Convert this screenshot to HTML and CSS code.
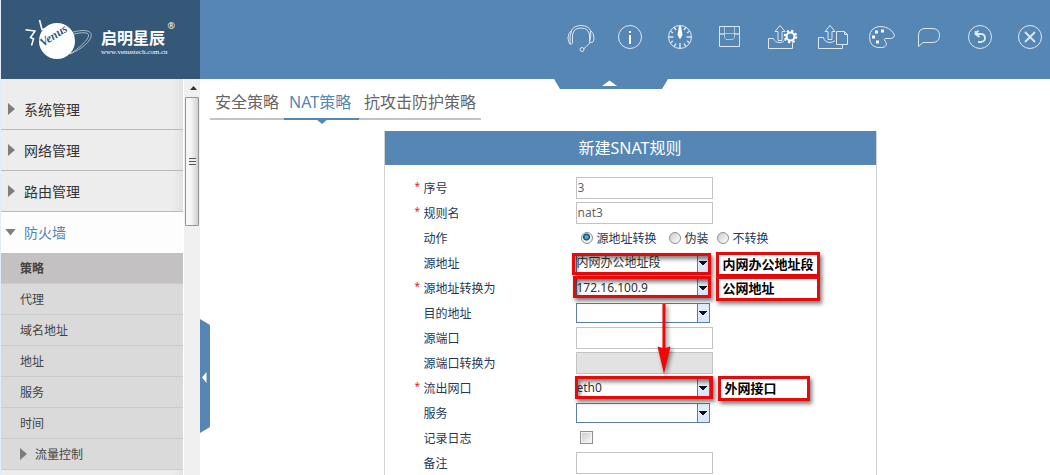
FILE: index.html
```html
<!DOCTYPE html>
<html lang="zh-CN">
<head>
<meta charset="utf-8">
<title>新建SNAT规则</title>
<link rel="stylesheet" href="styles.css">
</head>
<body>
<header class="topbar">
  <div class="brand">
    <svg class="brand-mark" width="74" height="44" viewBox="24 18 74 44" aria-hidden="true">
      <g fill="none" stroke="#fff" stroke-linejoin="miter">
        <path d="M25.500 29.800L35 31l-4.500 6.500 3 1.500-2 6.500" stroke-width="1.500"/>
        <path d="M39.500 20l2.500 9.500 3-.5" stroke-width="1.600"/>
        <path d="M69 33.500c10-4 20-4 22 0 2 6-8 15-21 20.500 8-5 20-15 18.500-19.500-2-3-10-2-19 1z" stroke-width=".7" stroke="#d5e0ea"/>
      </g>
      <circle cx="57" cy="41" r="18" fill="#fff"/>
      <text class="brand-script" x="43" y="47" transform="rotate(-33 43 47)">Venus</text>
    </svg>
    <div class="brand-words">
      <span class="brand-name">启明星辰</span>
      <span class="brand-url">www.venustech.com.cn</span>
    </div>
    <span class="brand-reg">®</span>
  </div>
  <nav class="tools" aria-label="工具栏">
    <button type="button" class="tool" aria-label="支持"><svg viewBox="0 0 30 30"><path d="M5 22Q3 20 3 16Q3 11 6.500 8.500Q9 3.500 16 3.500T25.500 8.500Q29 11 29 16T25.500 20.500L18.500 27M5 22Q8 23 7.500 19L7.500 13Q8.500 6 16 6T24.500 13V20.500M6.500 8.500Q4.500 14 5 22M25.500 8.500Q26.500 14 24.500 20.500"/><circle cx="17" cy="27.500" r="2"/></svg></button>
    <button type="button" class="tool" aria-label="信息"><svg viewBox="0 0 30 30"><circle cx="15" cy="15" r="11.500"/><path class="solid" d="M14 9h2v2h-2zM14 13h2v9h-2z"/></svg></button>
    <button type="button" class="tool" aria-label="仪表盘"><svg viewBox="0 0 30 30"><circle cx="15" cy="15" r="11.500"/><path d="M3.500 15h5M21.500 15h5M15 26v-5M9 5l2 3M5 9l3 2M5 21l3-2M9 25l2-3.500M21 5l-2 3M25 9l-3 2M25 21l-3-2M21 25l-2-3.500" stroke-width="1.500"/><path class="solid" d="M14 4h2l1.500 9L15 17.500 12.500 13z"/></svg></button>
    <button type="button" class="tool" aria-label="保存"><svg viewBox="0 0 30 30"><path d="M4.500 4.500h20v20h-20z"/><path d="M9.500 4.500v11l1.500 2h7l1.500-2v-11M4.500 11.500h20M4.500 12.500h5M19.500 12.500h5" opacity=".65"/></svg></button>
    <button type="button" class="tool" aria-label="导入设置"><svg viewBox="0 0 30 30"><path d="M8.500 16.500h-5v10h24v-6M8.500 16.500q1 4 6.500 4 3 0 4.500-2M13 18.500v-9h-3L15 3.500l5 6h-3v9z"/><g class="gear"><circle cx="25.500" cy="14.500" r="4" stroke-width="2.200"/><circle cx="25.500" cy="14.500" r="5.800" stroke-width="2" stroke-dasharray="2.300 2.250"/></g></svg></button>
    <button type="button" class="tool" aria-label="导出文件"><svg viewBox="0 0 30 30"><path d="M8.500 15.500h-5v11h24v-4M8.500 15.500q1 5 6.500 5 3 0 5-2M13 17.500v-8h-3L15 3.500l5 6h-3v8zM21.500 9.500h8l3 3v10h-11zM29.500 9.500v3h3"/></svg></button>
    <button type="button" class="tool" aria-label="主题"><svg viewBox="0 0 30 30"><path d="M14 4.500Q25 4 29.500 13Q29.500 16 26 16.500H20Q18 17.500 20.500 19.500Q23 24 18 25.500Q4 27 4.500 14.500Q5 6 14 4.500z"/><path class="solid" d="M10 8.500h3v3h-3zM16 7.500h3v3h-3zM7 13.500h3v3H7zM11 18.500h3v3h-3z"/></svg></button>
    <button type="button" class="tool" aria-label="消息"><svg viewBox="0 0 30 30"><path d="M3.500 24.500V13Q4 6.500 10 6.500H17Q24.500 6.500 24.500 13.500T17 20.500H8z"/></svg></button>
    <button type="button" class="tool" aria-label="刷新"><svg viewBox="0 0 30 30"><circle cx="15" cy="15" r="11.500"/><path d="M11 12h5.500q3.500.5 3.500 4t-4 4h-3M13.500 8.500L10.500 12l4 3M10.500 9v3.500" stroke-width="1.800"/></svg></button>
    <button type="button" class="tool" aria-label="关闭"><svg viewBox="0 0 30 30"><circle cx="15" cy="15" r="11.500"/><path d="M10 10l10 10M20 10L10 20" stroke-width="1.800"/></svg></button>
  </nav>
  <button type="button" class="fold-top" aria-label="收起顶栏"><svg width="114" height="10" viewBox="0 0 114 10"><path fill="#5686b4" d="M0 0h114l-6 10H6z"/><path fill="#fff" d="M48 7l7.500-5.500L63 7z"/></svg></button>
</header>

<div class="workspace">
  <aside class="sidebar">
    <nav class="menu" aria-label="主菜单">
      <a class="group" href="#system"><i class="caret"></i>系统管理</a>
      <a class="group" href="#network"><i class="caret"></i>网络管理</a>
      <a class="group" href="#route"><i class="caret"></i>路由管理</a>
      <a class="group open" href="#firewall"><i class="caret"></i>防火墙</a>
      <a class="item current" href="#policy">策略</a>
      <a class="item" href="#proxy">代理</a>
      <a class="item" href="#domain">域名地址</a>
      <a class="item" href="#address">地址</a>
      <a class="item" href="#service">服务</a>
      <a class="item" href="#time">时间</a>
      <a class="item" href="#traffic"><i class="caret"></i>流量控制</a>
    </nav>
    <div class="scrollbar" aria-hidden="true">
      <svg class="scroll-up" width="16" height="18"><path d="M5 11l3.500-4L12 11z" fill="#333"/></svg>
      <div class="thumb"><i class="grip"></i></div>
    </div>
    <button type="button" class="fold-side" aria-label="收起菜单"><svg width="10" height="114" viewBox="0 0 10 114"><path fill="#5686b4" d="M0 0l10 6v102l-10 6z"/><path fill="#fff" d="M2 58.500l4.500-5.500v11z"/></svg></button>
  </aside>

  <main class="content">
    <nav class="tabs" aria-label="策略类型">
      <a class="tab" href="#security">安全策略</a>
      <a class="tab active" href="#nat">NAT策略</a>
      <a class="tab" href="#attack">抗攻击防护策略</a>
    </nav>
    <form class="card">
      <h1 class="card-title">新建SNAT规则</h1>
      <div class="fields">
        <div class="row required"><label for="seq">序号</label><input class="text" id="seq" type="text" value="3"></div>
        <div class="row required"><label for="name">规则名</label><input class="text" id="name" type="text" value="nat3"></div>
        <div class="row" role="radiogroup" aria-labelledby="act"><span class="label" id="act">动作</span>
          <div class="choices">
            <label class="choice wide-choice"><input class="radio" type="radio" name="action" checked>源地址转换</label>
            <label class="choice"><input class="radio" type="radio" name="action">伪装</label>
            <label class="choice"><input class="radio" type="radio" name="action">不转换</label>
          </div></div>
        <div class="row"><label for="src">源地址</label><select class="combo" id="src"><option>内网办公地址段</option></select></div>
        <div class="row required"><label for="srcto">源地址转换为</label><select class="combo" id="srcto"><option>172.16.100.9</option></select></div>
        <div class="row"><label for="dst">目的地址</label><select class="combo" id="dst"><option></option></select></div>
        <div class="row"><label for="sport">源端口</label><input class="text" id="sport" type="text"></div>
        <div class="row"><label for="sportto">源端口转换为</label><input class="text" id="sportto" type="text" disabled></div>
        <div class="row required"><label for="out">流出网口</label><select class="combo" id="out"><option>eth0</option></select></div>
        <div class="row"><label for="svc">服务</label><select class="combo" id="svc"><option></option></select></div>
        <div class="row"><label for="log">记录日志</label><input class="check" id="log" type="checkbox"></div>
        <div class="row"><label for="memo">备注</label><input class="text" id="memo" type="text"></div>
      </div>
      <div class="mark mark-src"></div>
      <div class="mark mark-srcto"></div>
      <div class="mark mark-out"></div>
      <div class="note note-src">内网办公地址段</div>
      <div class="note note-srcto">公网地址</div>
      <div class="note note-out">外网接口</div>
      <svg class="arrow" width="16" height="72" viewBox="0 0 16 72" aria-hidden="true"><path fill="#f00808" d="M6.500 0h3v44l5-1.500L8 70 1.500 42.500l5 1.500z"/></svg>
    </form>
  </main>
</div>
</body>
</html>
```

FILE: styles.css
```css
* { box-sizing: border-box; }

body {
  margin: 0;
  height: 100vh;
  overflow: hidden;
  display: flex;
  flex-direction: column;
  border-left: 1px solid #e4ecf6;
  background: #fff;
  font-family: "Noto Sans", "Noto Sans CJK SC", sans-serif;
  font-size: 12px;
}

button { padding: 0; border: 0; background: none; }
a { color: inherit; text-decoration: none; }
svg { display: block; }

/* Top bar */
.topbar {
  position: relative;
  z-index: 2;
  flex: none;
  height: 79px;
  display: flex;
  justify-content: space-between;
  background: #5686b4;
}
.brand {
  width: 199px;
  padding: 18px 0 0 23px;
  display: flex;
  align-items: flex-start;
  background: #355878;
  color: #fff;
}
.brand-script {
  font: italic bold 12px "Liberation Serif", serif;
  fill: #355878;
}
.brand-words {
  display: flex;
  flex-direction: column;
  padding: 10px 0 0 3px;
}
.brand-name {
  font-size: 16px;
  font-weight: 700;
  line-height: 20px;
  white-space: nowrap;
}
.brand-url {
  font: 7px/8px "Liberation Serif", serif;
}
.brand-reg { font-size: 9px; line-height: 16px; }
.tools {
  display: flex;
  gap: 20px;
  padding: 22px 5px 0 0;
}
.tool { width: 30px; height: 30px; }
.tool svg {
  width: 30px;
  height: 30px;
  overflow: visible;
  fill: none;
  stroke: #dce8f5;
  stroke-width: 1;
}
.tool .solid { fill: #fff; stroke: none; }
.tool .gear { stroke: #fff; }
.tool .gear circle:first-child { fill: #5686b4; }
.fold-top {
  position: absolute;
  top: 100%;
  left: calc(50% + 28px);
}

/* Sidebar */
.workspace { flex: 1; min-height: 0; display: flex; }
.sidebar {
  position: relative;
  flex: none;
  width: 199px;
  display: flex;
}
.menu {
  flex: 1;
  padding-top: 10px;
  overflow: hidden;
  background: linear-gradient(to right, #ededed 94%, #e2e2e2);
}
.group {
  height: 41px;
  padding-left: 7px;
  display: flex;
  align-items: center;
  gap: 9px;
  border-bottom: 1px solid #bababa;
  color: #333;
  font-size: 14px;
}
.caret {
  width: 7px;
  height: 12px;
  background: #7d7d7d;
  clip-path: polygon(0 0, 100% 50%, 0 100%);
}
.open {
  padding-left: 4px;
  gap: 8px;
  border-bottom-color: #fdfdfd;
  background: #fdfdfd;
  color: #5686b4;
}
.open .caret {
  width: 11px;
  height: 7px;
  clip-path: polygon(0 0, 100% 0, 50% 100%);
}
.item {
  height: 31px;
  padding-left: 19px;
  display: flex;
  align-items: center;
  gap: 8px;
  border-bottom: 1px solid #cbcbcb;
  background: #dadada;
  color: #444;
}
.item:last-child { box-shadow: 0 40px #dadada; }
.current { background: #c3c1c1; font-weight: 700; }
.scrollbar {
  width: 17px;
  padding: 0 1px;
  border-left: 1px solid #fff;
  background: #f0f0f0;
}
.thumb {
  height: 129px;
  display: grid;
  place-items: center;
  border: 1px solid #949494;
  border-radius: 1px;
  background: linear-gradient(to right, #f6f6f6 40%, #cfcfd2);
}
.grip {
  width: 7px;
  height: 8px;
  background: repeating-linear-gradient(#555 0 1px, #eee 1px 3px);
}
.fold-side { position: absolute; left: 100%; top: 240px; }

/* Content */
.content {
  flex: 1;
  padding-left: 10px;
  display: flex;
  flex-direction: column;
  align-items: center;
}
.tabs { align-self: flex-start; display: flex; }
.tab {
  position: relative;
  height: 41px;
  padding: 11px 5px 0;
  border-bottom: 2px solid #c3c3c3;
  color: #666;
  font-size: 16px;
  line-height: 24px;
}
.tab.active { min-width: 75px; border-color: #5686b4; color: #5686b4; }
.tab.active::after {
  content: "";
  position: absolute;
  top: 100%;
  left: 50%;
  margin: 1px 0 0 -6px;
  border: 6px solid transparent;
  border-top: 5px solid #5686b4;
  border-bottom: 0;
}
.card {
  position: relative;
  flex: 1;
  width: 100%;
  max-width: 493px;
  margin-top: 11px;
  border: 1px solid #d3d3d3;
  border-width: 0 1px;
}
.card-title {
  margin: 0;
  background: #5686b4;
  color: #fff;
  font-size: 16px;
  font-weight: 400;
  line-height: 34px;
  text-align: center;
}
.fields { padding: 10px 0 0 30px; }
.row {
  height: 25px;
  display: grid;
  grid-template-columns: 161px 1fr;
  align-items: center;
  color: #253858;
}
.row > label, .label { position: relative; padding-left: 9px; }
.required > label::before {
  content: "*";
  position: absolute;
  left: 0;
  color: #e02020;
  font-size: 10px;
}
.text, .combo {
  font: inherit;
  border-radius: 0;
  margin: 0;
}
.text {
  width: 137px;
  height: 22px;
  padding: 0 1px;
  border: 1px solid #c3c3c3;
  background: #fff;
  color: #666;
}
.text:disabled { background: #e2e2e2; }
.combo {
  appearance: none;
  width: 134px;
  height: 20px;
  padding: 0 14px 0 0;
  border: 1px solid #5c7da8;
  background:
    conic-gradient(from -50deg at 50% 100%, #111 100deg, transparent 0) right 2px center / 8px 4px no-repeat,
    linear-gradient(#5c7da8, #5c7da8) right 11px top / 1px 100% no-repeat,
    linear-gradient(#e3eefb, #d8e8fb) right top / 11px 100% no-repeat,
    #fff;
  color: #333;
  line-height: 18px;
}
.choices { display: flex; gap: 8px; padding: 1px 0 0 5px; }
.choice { display: flex; align-items: center; gap: 4px; }
.wide-choice { padding-right: 4px; }
.radio, .check { appearance: none; margin: 0; border: 1px solid #8e8f8f; }
.radio {
  width: 12px;
  height: 12px;
  border-radius: 50%;
  background: linear-gradient(135deg, #ccc, #fff);
}
.radio:checked { background: radial-gradient(circle at 45% 40%, #49bde4 0 1px, #154566 3px, #eee 4px); }
.check {
  width: 13px;
  height: 13px;
  margin-left: 4px;
  background: linear-gradient(135deg, #c6cace, #fafafa);
  box-shadow: inset 0 0 0 1px #f4f4f4;
}

/* Callouts over the form */
.mark, .note {
  position: absolute;
  border: 3px solid #e60a0a;
  box-shadow: 2px 3px 4px rgba(0, 0, 0, .5);
}
.mark { box-shadow: 2px 3px 4px rgba(0, 0, 0, .5), inset 2px 3px 4px rgba(0, 0, 0, .5); pointer-events: none; }
.mark-src { left: 187px; top: 122px; width: 139px; height: 22px; }
.mark-srcto { left: 188px; top: 145px; width: 138px; height: 22px; }
.mark-out { left: 190px; top: 245px; width: 138px; height: 23px; }
.note {
  height: 25px;
  padding-left: 4px;
  background: #fff;
  color: #000;
  font-size: 13px;
  font-weight: 700;
  line-height: 19px;
  white-space: nowrap;
}
.note-src { left: 331px; top: 121px; width: 104px; }
.note-srcto { left: 331px; top: 145px; width: 104px; }
.note-out { left: 333px; top: 245px; width: 92px; }
.arrow {
  position: absolute;
  left: 271px;
  top: 173px;
  filter: drop-shadow(2px 2px 2px rgba(0, 0, 0, .5));
}
```
